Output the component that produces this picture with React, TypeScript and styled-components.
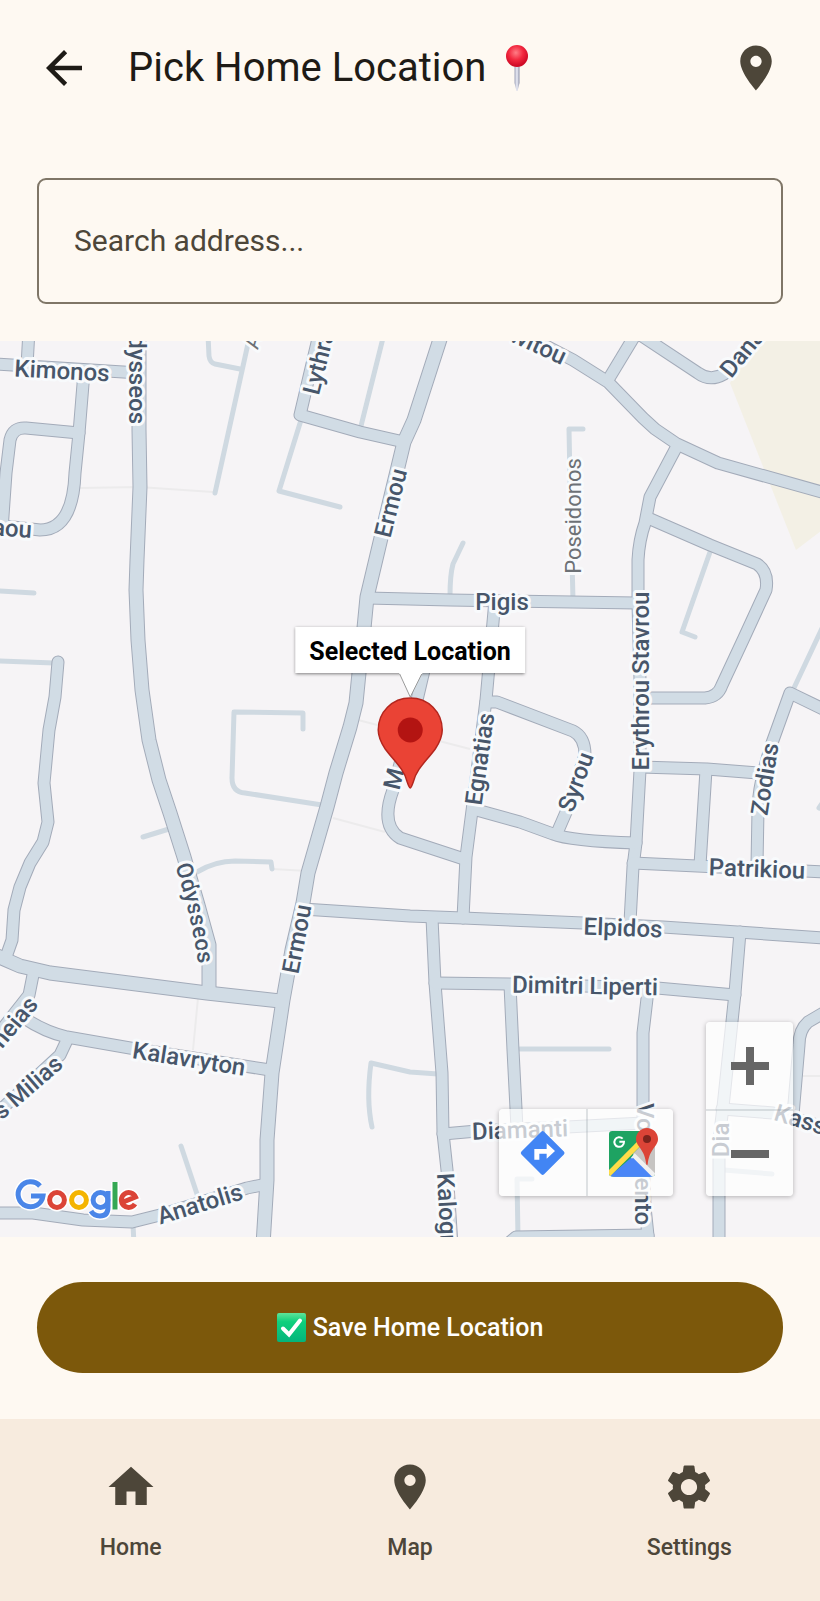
import React from "react";
import styled, { createGlobalStyle } from "styled-components";

const GlobalStyle = createGlobalStyle`
  * { box-sizing: border-box; }
  body { margin: 0; background: #fef9f2; font-family: Roboto, "Noto Sans", sans-serif; }
`;

const Page = styled.div`
  display: flex;
  flex-direction: column;
  min-height: 100vh;
  background: #fef9f2;
  color: #1e1b16;
`;

const TopBar = styled.header`
  display: flex;
  align-items: center;
  gap: 37px;
  height: 136px;
  padding: 0 37px;
`;

const IconButton = styled.button<{ $color: string }>`
  display: flex;
  width: 54px;
  height: 54px;
  padding: 0;
  border: 0;
  background: none;
  color: ${(p) => p.$color};
  cursor: pointer;
`;

const Title = styled.h1`
  display: flex;
  align-items: center;
  flex: 1;
  gap: 16px;
  margin: 0;
  font-size: 40px;
  font-weight: 400;
  line-height: 48px;
`;

const SearchForm = styled.form`
  padding: 42px 37px 37px;
`;

const SearchInput = styled.input`
  display: block;
  width: 100%;
  height: 126px;
  padding: 0 35px 2px;
  border: 2px solid #7f7667;
  border-radius: 9px;
  background: transparent;
  color: #1e1b16;
  font-family: inherit;
  font-size: 30px;
  outline: none;
  &::placeholder { color: #4d4639; opacity: 1; }
`;

const MapArea = styled.main`
  position: relative;
  flex: 1;
  min-height: 600px;
  overflow: hidden;
  background: #f6f4f6;
`;

const MapCanvas = styled.svg`
  position: absolute;
  inset: 0;
  width: 100%;
  height: 100%;
  font-family: Roboto, "Noto Sans", sans-serif;
`;

const Marker = styled.div`
  position: absolute;
  left: 50%;
  bottom: 50%;
  display: flex;
  flex-direction: column;
  align-items: center;
  transform: translateX(-50%);
`;

const InfoWindow = styled.div`
  padding: 11px 14px 7px;
  background: #fff;
  box-shadow: 0 1px 3px rgba(0, 0, 0, 0.5);
  color: #000;
  font-size: 25px;
  font-weight: 700;
  line-height: 28px;
  white-space: nowrap;
`;

const MapTools = styled.div`
  position: absolute;
  right: 27px;
  bottom: 41px;
  display: flex;
  align-items: flex-end;
  gap: 33px;
`;

const ToolGroup = styled.div<{ $vertical?: boolean }>`
  display: flex;
  flex-direction: ${(p) => (p.$vertical ? "column" : "row")};
  border-radius: 4px;
  background: rgba(255, 255, 255, 0.7);
  box-shadow: 0 1px 5px rgba(0, 0, 0, 0.28);
`;

const ToolButton = styled.button<{ $divider?: "left" | "top" }>`
  display: flex;
  align-items: center;
  justify-content: center;
  width: 87px;
  height: 87px;
  padding: 0;
  border: 0 solid rgba(120, 130, 140, 0.22);
  ${(p) => p.$divider && `border-${p.$divider}-width: 2px;`}
  background: none;
  cursor: pointer;
`;

const SaveBar = styled.div`
  padding: 45px 37px 46px;
`;

const SaveButton = styled.button`
  display: flex;
  align-items: center;
  justify-content: center;
  gap: 7px;
  width: 100%;
  height: 91px;
  border: 0;
  border-radius: 46px;
  background: #7c580b;
  color: #fff;
  font-family: inherit;
  font-size: 25px;
  font-weight: 500;
  cursor: pointer;
`;

const BottomNav = styled.nav`
  display: grid;
  grid-template-columns: repeat(3, 1fr);
  gap: 18px;
  padding: 41px 0 39px;
  background: #f7ebde;
`;

const NavItem = styled.a`
  display: flex;
  flex-direction: column;
  align-items: center;
  gap: 20px;
  color: #4d4639;
  font-size: 23px;
  font-weight: 500;
  line-height: 28px;
  text-decoration: none;
`;

const Glyph = ({ d }: { d: string }) => (
  <svg width="54" height="54" viewBox="0 0 24 24" fill="currentColor" aria-hidden="true">
    <path d={d} />
  </svg>
);

const ICONS = {
  back: "M20 11H7.83l5.59-5.59L12 4l-8 8 8 8 1.41-1.41L7.83 13H20v-2z",
  place:
    "M12 2C8.13 2 5 5.13 5 9c0 5.25 7 13 7 13s7-7.75 7-13c0-3.87-3.13-7-7-7zm0 9.5c-1.38 0-2.5-1.12-2.5-2.5s1.12-2.5 2.5-2.5 2.5 1.12 2.5 2.5-1.12 2.5-2.5 2.5z",
  home: "M10 20v-6h4v6h5v-8h3L12 3 2 12h3v8z",
  settings:
    "M19.14 12.94c.04-.3.06-.61.06-.94 0-.32-.02-.64-.07-.94l2.03-1.58c.18-.14.23-.41.12-.61l-1.92-3.32c-.12-.22-.37-.29-.59-.22l-2.39.96c-.5-.38-1.03-.7-1.62-.94l-.36-2.54c-.04-.24-.24-.41-.48-.41h-3.84c-.24 0-.43.17-.47.41l-.36 2.54c-.59.24-1.13.57-1.62.94l-2.39-.96c-.22-.08-.47 0-.59.22L2.74 8.87c-.12.21-.08.47.12.61l2.03 1.58c-.05.3-.09.63-.09.94s.02.64.07.94l-2.03 1.58c-.18.14-.23.41-.12.61l1.92 3.32c.12.22.37.29.59.22l2.39-.96c.5.38 1.03.7 1.62.94l.36 2.54c.05.24.24.41.48.41h3.84c.24 0 .44-.17.47-.41l.36-2.54c.59-.24 1.13-.56 1.62-.94l2.39.96c.22.08.47 0 .59-.22l1.92-3.32c.12-.22.07-.47-.12-.61l-2.01-1.58zM12 15.6c-1.98 0-3.6-1.62-3.6-3.6s1.62-3.6 3.6-3.6 3.6 1.62 3.6 3.6-1.62 3.6-3.6 3.6z",
};

const Pushpin = () => (
  <svg width="30" height="48" viewBox="0 0 30 48" role="img" aria-label="pushpin">
    <defs>
      <radialGradient id="ball" cx="45%" cy="35%" r="60%">
        <stop offset="0" stopColor="#ff7d86" />
        <stop offset="0.55" stopColor="#f2283f" />
        <stop offset="1" stopColor="#cf0a26" />
      </radialGradient>
      <linearGradient id="needle">
        <stop offset="0" stopColor="#9fa3b8" />
        <stop offset="0.5" stopColor="#eceef8" />
        <stop offset="1" stopColor="#8b8fa6" />
      </linearGradient>
    </defs>
    <path d="M12.5 20h5v19l-2 8h-1l-2-8z" fill="url(#needle)" />
    <circle cx="15" cy="12" r="11" fill="url(#ball)" />
  </svg>
);

const CheckMark = () => (
  <svg width="29" height="29" viewBox="0 0 29 29" aria-hidden="true">
    <defs>
      <linearGradient id="check" x2="0" y2="1">
        <stop offset="0" stopColor="#5fe49a" />
        <stop offset="0.3" stopColor="#0fd07c" />
        <stop offset="1" stopColor="#04b47b" />
      </linearGradient>
    </defs>
    <rect width="29" height="29" rx="2" fill="url(#check)" />
    <path d="M6 15.5l6 6L23 7.5" fill="none" stroke="#fff" strokeWidth="4" strokeLinecap="round" />
  </svg>
);

/* Streets are drawn twice: a darker casing below, the road surface above. */
const MAIN_STREETS = [
  "M139 330V430L140 487L137 560L136 590L138 640L142 690L149 740L159 780L170 813L184 857L198 905L209 945V990",
  "M443 330L414 420L404 442L390 500L367 597L364 628L359 673L356 703L350 727L336 773L327 807L308 873L303 903L292 950L283 1000L277 1040L272 1073L267 1140L267 1180L263 1245",
  "M-5 955L20 966L50 973L207 993L280 1001",
];

const STREETS = [
  "M-5 364L139 373",
  "M29 330L27 366",
  "M84 372L79 433L75 473Q73 530 40 530L-5 525",
  "M79 433L26 428Q13 427 10 440L6 473L2 530",
  "M320 330L300 415L360 432L404 442",
  "M367 598L450 600L636 603",
  "M500 322L573 360L608 382L643 418L655 429L677 444L718 463L825 493",
  "M608 380L637 332",
  "M636 332L698 373Q710 382 724 374L745 352L762 330",
  "M677 446L650 497L645 523Q639 540 638 560V603L640 680L640 770L636 843L633 867L630 922",
  "M648 518L710 545L757 564Q769 572 766 590L743 640L722 685Q718 697 705 698H640",
  "M825 710L790 693L772 743Q758 785 758 810L757 865",
  "M640 767L707 769L758 773",
  "M706 770L700 865",
  "M633 863L697 866L825 872",
  "M303 909L410 916L463 918L583 923L663 927L825 938",
  "M495 600L486 700L473 803L466 857L463 918",
  "M486 702H497L573 731Q585 737 585 755L567 810L557 833",
  "M473 809L520 822L553 834Q570 841 636 843",
  "M430 645L417 700L393 790Q380 825 400 838L464 859",
  "M58 662L55 697L49 730L44 783L48 822L43 842L30 863L20 887L14 910L12 940L6 957",
  "M34 970L29 995L-8 1042",
  "M24 1018Q45 1032 67 1037L130 1048L270 1070",
  "M68 1038L60 1055L-5 1115",
  "M-5 1213H33L83 1220L132 1222L160 1215L247 1188L267 1184",
  "M432 918L435 983L442 1073L443 1133L447 1170L452 1245",
  "M435 983L510 984L657 988L735 995",
  "M510 985L513 1050L517 1128",
  "M648 990L643 1033V1150L645 1207L649 1245",
  "M443 1134L477 1131L567 1127L643 1123",
  "M510 1242L516 1237L648 1235",
  "M740 932L735 993L723 1107L719 1140V1245",
  "M722 1109L773 1113L825 1127",
  "M825 1012L808 1022Q799 1030 799 1045L793 1115",
];

const LANES = [
  "M0 591L34 593",
  "M208 335L209 356Q210 363 215 364L240 369",
  "M251 330L215 493",
  "M385 330L361 426",
  "M301 420L279 491L340 507",
  "M583 429H569L570 480L573 600",
  "M463 543L453 564Q450 575 450 596",
  "M710 552L682 632L695 637",
  "M825 622L793 690",
  "M0 661L54 663",
  "M303 729V713L234 712L232 778Q232 792 245 793L322 805",
  "M143 837L169 829",
  "M197 872Q215 861 235 861L271 862L272 869",
  "M181 1146L198 1197",
  "M133 1224L134 1245",
  "M372 1127Q366 1100 371 1063L410 1072L438 1074",
  "M520 1049H609",
  "M532 1179H517L518 1237",
  "M724 1170L772 1174",
  "M819 808L823 802",
];

const FOOTPATHS = [
  "M80 488L139 487L213 492",
  "M358 720L470 749",
  "M333 818L385 832",
  "M272 869L308 871",
  "M198 998L193 1050",
  "M798 1076H820",
];

type Label = { t: string; x: number; y: number; r: number; a?: "start" | "end"; lane?: boolean };

const LABELS: Label[] = [
  { t: "Kimonos", x: 62, y: 371, r: 3 },
  { t: "Odysseos", x: 137, y: 424, r: 90, a: "end" },
  { t: "aou", x: 32, y: 530, r: 4, a: "end" },
  { t: "A", x: 250, y: 348, r: -74, a: "start", lane: true },
  { t: "Lythras", x: 311, y: 394, r: -76, a: "start" },
  { t: "Ermou", x: 391, y: 503, r: -76 },
  { t: "Ermou", x: 297, y: 939, r: -79 },
  { t: "Poseidonos", x: 573, y: 516, r: -90, lane: true },
  { t: "Pigis", x: 502, y: 602, r: 0 },
  { t: "witou", x: 565, y: 358, r: 25, a: "end" },
  { t: "Danais", x: 725, y: 374, r: -51, a: "start" },
  { t: "Erythrou Stavrou", x: 641, y: 681, r: -90 },
  { t: "Egnatias", x: 480, y: 759, r: -82 },
  { t: "Syrou", x: 576, y: 782, r: -70 },
  { t: "Zodias", x: 765, y: 779, r: -81 },
  { t: "M", x: 394, y: 779, r: -76 },
  { t: "Patrikiou", x: 757, y: 869, r: 2 },
  { t: "Elpidos", x: 623, y: 928, r: 2 },
  { t: "Dimitri Liperti", x: 585, y: 986, r: 1 },
  { t: "Kalavryton", x: 189, y: 1059, r: 9 },
  { t: "neias", x: 33, y: 1000, r: -50, a: "end" },
  { t: "s Milias", x: 59, y: 1060, r: -41, a: "end" },
  { t: "Anatolis", x: 200, y: 1204, r: -17 },
  { t: "Diamanti", x: 520, y: 1130, r: -2 },
  { t: "Vo", x: 645, y: 1103, r: 90, a: "start" },
  { t: "ento", x: 643, y: 1225, r: 90, a: "end" },
  { t: "Kalogr", x: 445, y: 1173, r: 87, a: "start" },
  { t: "Kass", x: 775, y: 1112, r: 17, a: "start" },
  { t: "Dia", x: 721, y: 1140, r: -90 },
];

const lettering = {
  stroke: "#f8fafc",
  strokeWidth: 6,
  strokeLinejoin: "round" as const,
  paintOrder: "stroke",
};

const GoogleShapes = ({ halo }: { halo?: boolean }) => {
  const blue = halo ? "#fff" : "#4a86e8";
  const red = halo ? "#fff" : "#db4437";
  const yellow = halo ? "#fff" : "#f4b400";
  const green = halo ? "#fff" : "#34a853";
  return (
    <g fill="none" strokeWidth={halo ? 8 : 5}>
      <path d="M40 1186A12.500 12.500 0 1 0 43 1196H31" stroke={blue} />
      <circle cx="57" cy="1200" r="7.400" stroke={red} />
      <circle cx="79" cy="1200" r="7.400" stroke={yellow} />
      <circle cx="100.500" cy="1200" r="7.400" stroke={blue} />
      <path d="M108 1191V1207Q108 1216 100 1216Q94 1216 91 1211" stroke={blue} />
      <path d="M115 1182V1209.500" stroke={green} />
      <path d="M122 1202.500L135.500 1197A7.400 7.400 0 1 0 135 1204" stroke={red} />
    </g>
  );
};

const StreetMap = () => (
  <MapCanvas viewBox="0 341 820 896" preserveAspectRatio="xMidYMid slice" role="img" aria-label="Street map">
    <path d="M760 330L730 383L796 550L825 528V330Z" fill="#f3f0e5" />
    <g fill="none" stroke="#ecebec" strokeWidth="2">
      {FOOTPATHS.map((d) => <path key={d} d={d} />)}
    </g>
    <g fill="none" stroke="#cfd9e1" strokeWidth="5" strokeLinejoin="round" strokeLinecap="round">
      {LANES.map((d) => <path key={d} d={d} />)}
    </g>
    <g fill="none" stroke="#a3abb9" strokeLinejoin="round" strokeLinecap="round">
      <g strokeWidth="13">{STREETS.map((d) => <path key={d} d={d} />)}</g>
      <g strokeWidth="15">{MAIN_STREETS.map((d) => <path key={d} d={d} />)}</g>
    </g>
    <g fill="none" stroke="#d1dce5" strokeLinejoin="round" strokeLinecap="round">
      <g strokeWidth="11">{STREETS.map((d) => <path key={d} d={d} />)}</g>
      <g strokeWidth="13">{MAIN_STREETS.map((d) => <path key={d} d={d} />)}</g>
    </g>
    {LABELS.map((l) => (
      <text
        key={l.t + l.y}
        {...lettering}
        dy="8"
        textAnchor={l.a ?? "middle"}
        fontSize={l.lane ? 22 : 24}
        fontWeight={l.lane ? 400 : 500}
        fill={l.lane ? "#6d7176" : "#47566a"}
        transform={`translate(${l.x} ${l.y}) rotate(${l.r})`}
      >
        {l.t}
      </text>
    ))}
    <path id="odysseos" d="M175 866Q190 908 198 963" fill="none" />
    <text {...lettering} fontSize="23" fontWeight="500" fill="#47566a">
      <textPath href="#odysseos">Odysseos</textPath>
    </text>
    <g role="img" aria-label="Google">
      <GoogleShapes halo />
      <GoogleShapes />
    </g>
  </MapCanvas>
);

const MarkerPin = () => (
  <svg width="68" height="116" viewBox="0 0 68 116" aria-hidden="true">
    <path d="M23 0L34 24L46 0" fill="#fff" stroke="#9a9a9a" strokeWidth="1" />
    <path d="M23 -1H46V1H23Z" fill="#fff" />
    <path
      d="M34 25C16 25 2 39 2 57C2 64 5 70 9 76C17 87 28 96 31 109Q33 115 34 115Q35 115 37 109C40 96 51 87 59 76C63 70 66 64 66 57C66 39 52 25 34 25Z"
      fill="#ea4335"
      stroke="#b3261e"
      strokeWidth="1.500"
    />
    <circle cx="34" cy="57" r="12.500" fill="#b31412" />
  </svg>
);

const DirectionsIcon = () => (
  <svg width="50" height="50" viewBox="112 355 150 150" aria-hidden="true">
    <rect x="138" y="382" width="96" height="96" rx="6" fill="#4285f4" transform="rotate(45 186 430)" />
    <path d="M161 450V418H198V401L223 424L198 447V432H176V450Z" fill="#fff" />
  </svg>
);

const MapsIcon = () => (
  <svg width="50" height="50" viewBox="375 352 150 150" overflow="visible" aria-hidden="true">
    <defs>
      <clipPath id="tile"><rect x="384" y="361" width="138" height="137" rx="10" /></clipPath>
    </defs>
    <g clipPath="url(#tile)">
      <rect x="384" y="361" width="138" height="137" fill="#1ea362" />
      <path d="M455 430L522 363V498Z" fill="#c6c4c2" />
      <path d="M384 498L454 438L515 498Z" fill="#4a86f7" />
      <path d="M375 498L500 373" stroke="#ffdc48" strokeWidth="16" />
      <path d="M450 441L461 428L530 496L520 510Z" fill="#f1f1f1" />
      <path d="M384 510L456 441L525 510Z" fill="#4a86f7" />
    </g>
    <path d="M425 384A14.500 14.500 0 1 0 429 393H415" fill="none" stroke="#fff" strokeWidth="6" />
    <path d="M498 352C479 352 465 367 465 385C465 408 492 415 496 462H500C504 415 531 408 531 385C531 367 517 352 498 352Z" fill="#dc4437" />
    <circle cx="498" cy="385" r="12" fill="#7d231c" />
  </svg>
);

const Sign = ({ d }: { d: string }) => (
  <svg width="38" height="38" viewBox="0 0 38 38" fill="none" stroke="#666" strokeWidth="8" aria-hidden="true">
    <path d={d} />
  </svg>
);

export default function App() {
  return (
    <Page>
      <GlobalStyle />
      <TopBar>
        <IconButton type="button" $color="#1e1b16" aria-label="Back"><Glyph d={ICONS.back} /></IconButton>
        <Title>Pick Home Location <Pushpin /></Title>
        <IconButton type="button" $color="#4d4639" aria-label="My location"><Glyph d={ICONS.place} /></IconButton>
      </TopBar>
      <SearchForm onSubmit={(e) => e.preventDefault()}>
        <SearchInput type="text" placeholder="Search address..." aria-label="Search address" />
      </SearchForm>
      <MapArea>
        <StreetMap />
        <Marker>
          <InfoWindow>Selected Location</InfoWindow>
          <MarkerPin />
        </Marker>
        <MapTools>
          <ToolGroup>
            <ToolButton type="button" aria-label="Directions"><DirectionsIcon /></ToolButton>
            <ToolButton type="button" $divider="left" aria-label="Open in maps"><MapsIcon /></ToolButton>
          </ToolGroup>
          <ToolGroup $vertical>
            <ToolButton type="button" aria-label="Zoom in"><Sign d="M0 19H38M19 0V38" /></ToolButton>
            <ToolButton type="button" $divider="top" aria-label="Zoom out"><Sign d="M0 19H38" /></ToolButton>
          </ToolGroup>
        </MapTools>
      </MapArea>
      <SaveBar>
        <SaveButton type="button"><CheckMark />Save Home Location</SaveButton>
      </SaveBar>
      <BottomNav>
        <NavItem href="#home"><Glyph d={ICONS.home} />Home</NavItem>
        <NavItem href="#map"><Glyph d={ICONS.place} />Map</NavItem>
        <NavItem href="#settings"><Glyph d={ICONS.settings} />Settings</NavItem>
      </BottomNav>
    </Page>
  );
}
